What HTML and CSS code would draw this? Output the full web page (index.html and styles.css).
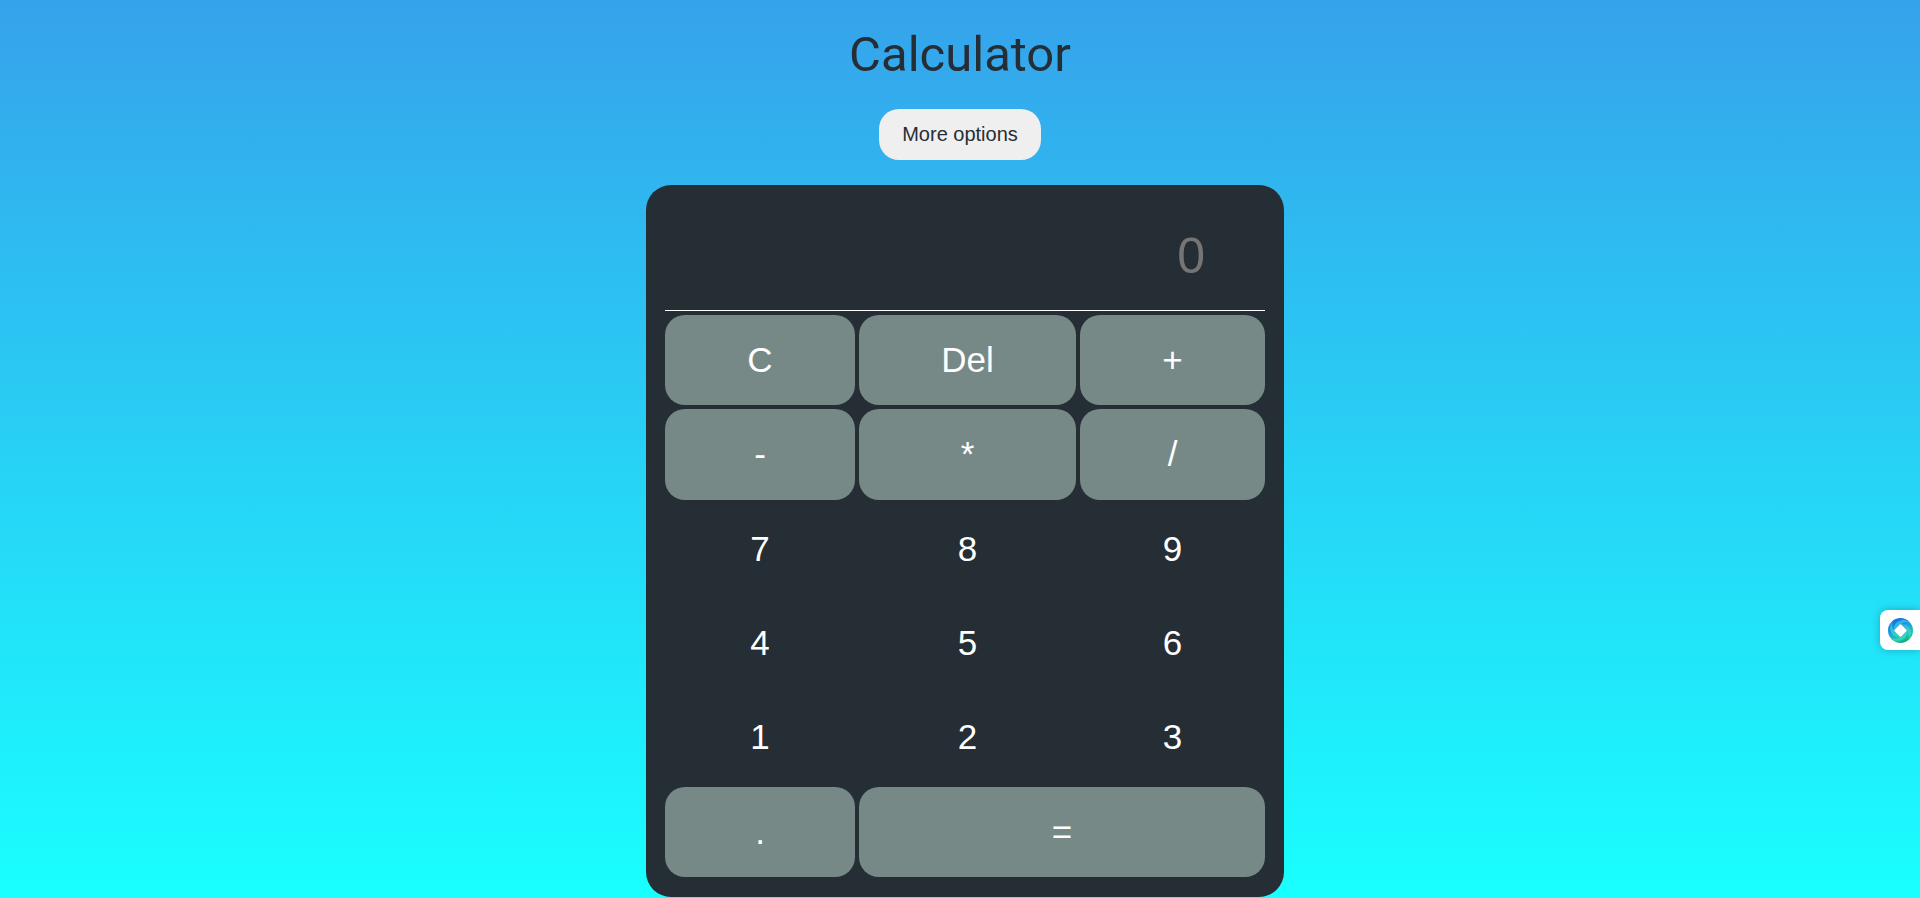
FILE: index.html
```html
<!DOCTYPE html>
<html lang="en">
<head>
<meta charset="utf-8">
<title>Calculator</title>
<link rel="stylesheet" href="styles.css">
</head>
<body>
<main class="page">
  <h1 class="title">Calculator</h1>
  <button class="more" type="button">More options</button>
  <section class="calculator" aria-label="Calculator">
    <input class="display" type="text" placeholder="0" aria-label="Result">
    <div class="keys">
      <button class="key key-op" type="button">C</button>
      <button class="key key-op" type="button">Del</button>
      <button class="key key-op" type="button">+</button>
      <button class="key key-op" type="button">-</button>
      <button class="key key-op" type="button">*</button>
      <button class="key key-op" type="button">/</button>
      <button class="key" type="button">7</button>
      <button class="key" type="button">8</button>
      <button class="key" type="button">9</button>
      <button class="key" type="button">4</button>
      <button class="key" type="button">5</button>
      <button class="key" type="button">6</button>
      <button class="key" type="button">1</button>
      <button class="key" type="button">2</button>
      <button class="key" type="button">3</button>
      <button class="key key-op" type="button">.</button>
      <button class="key key-op key-wide" type="button">=</button>
    </div>
  </section>
</main>
<button class="side-tab" type="button" aria-label="Open assistant">
  <svg class="side-icon" viewBox="0 0 50 50" aria-hidden="true">
    <defs>
      <linearGradient id="ring" x1="0.2" y1="0" x2="0.7" y2="1">
        <stop offset="0" stop-color="#0f66dc"/>
        <stop offset="0.45" stop-color="#1f9fdc"/>
        <stop offset="0.75" stop-color="#1fc8a8"/>
        <stop offset="1" stop-color="#0aa47c"/>
      </linearGradient>
      <linearGradient id="band" x1="0" y1="0" x2="0.6" y2="1">
        <stop offset="0" stop-color="#3fb0f8"/>
        <stop offset="0.6" stop-color="#3cd6e0"/>
        <stop offset="1" stop-color="#3ae0b4"/>
      </linearGradient>
    </defs>
    <circle cx="25" cy="25" r="25" fill="url(#ring)"/>
    <g fill="url(#band)" opacity="0.7">
      <path d="M13 25 L26 12 Q35 5 45 11 Q34 -1 20 7 Q10 13 13 25Z"/>
      <path d="M25 13 L38 26 Q45 35 39 45 Q51 34 43 20 Q37 10 25 13Z"/>
      <path d="M37 25 L24 38 Q15 45 5 39 Q16 51 30 43 Q40 37 37 25Z"/>
      <path d="M25 37 L12 24 Q5 15 11 5 Q-1 16 7 30 Q13 40 25 37Z"/>
    </g>
    <path d="M25 14 L36 25 L25 36 L14 25Z" fill="#fff" stroke="#fff" stroke-width="3" stroke-linejoin="round"/>
  </svg>
</button>
</body>
</html>
```
FILE: styles.css
```css
* {
  box-sizing: border-box;
}

body {
  margin: 0;
  min-height: 100vh;
  background: linear-gradient(to bottom, #36a2eb, #19ffff);
  font-family: "Liberation Sans", Arial, sans-serif;
  color: #262e35;
}

.page {
  display: flex;
  flex-direction: column;
  align-items: center;
  padding-top: 25px;
}

.title {
  margin: 0 0 24px;
  font: 400 49px/60px Roboto, sans-serif;
}

.more {
  margin-bottom: 25px;
  padding: 0 23px;
  border: 0;
  border-radius: 20px;
  background: #efefef;
  color: inherit;
  font: 20px/51px "Liberation Sans", Arial, sans-serif;
}

.calculator {
  width: 638px;
  max-width: 100%;
  margin-left: 10px;
  padding: 19px 19px 20px;
  border-radius: 25px;
  background: #262e35;
}

.display {
  display: block;
  width: 100%;
  height: 107px;
  margin-bottom: 4px;
  padding: 0 60px 2px 0;
  border: 0;
  border-bottom: 1px solid #fff;
  background: transparent;
  color: #fff;
  text-align: right;
  font: 50px "Liberation Sans", Arial, sans-serif;
}

.display::placeholder {
  color: #757575;
}

.keys {
  display: grid;
  grid-template-columns: 190fr 217fr 185fr;
  grid-auto-rows: 1fr;
  gap: 4px;
  min-height: 562px;
}

.key {
  padding: 0;
  border: 0;
  border-radius: 20px;
  background: transparent;
  color: #fff;
  font: 35px "Liberation Sans", Arial, sans-serif;
}

.key-op {
  background: #768987;
}

.key-wide {
  grid-column: span 2;
}

.side-tab {
  position: fixed;
  top: 610px;
  right: 0;
  display: flex;
  align-items: center;
  width: 40px;
  height: 40px;
  padding: 0 0 0 8px;
  border: 0;
  border-radius: 8px 0 0 8px;
  background: #fff;
  box-shadow: 0 0 8px rgba(0, 0, 0, 0.25);
}

.side-icon {
  width: 25px;
  height: 25px;
}
```
